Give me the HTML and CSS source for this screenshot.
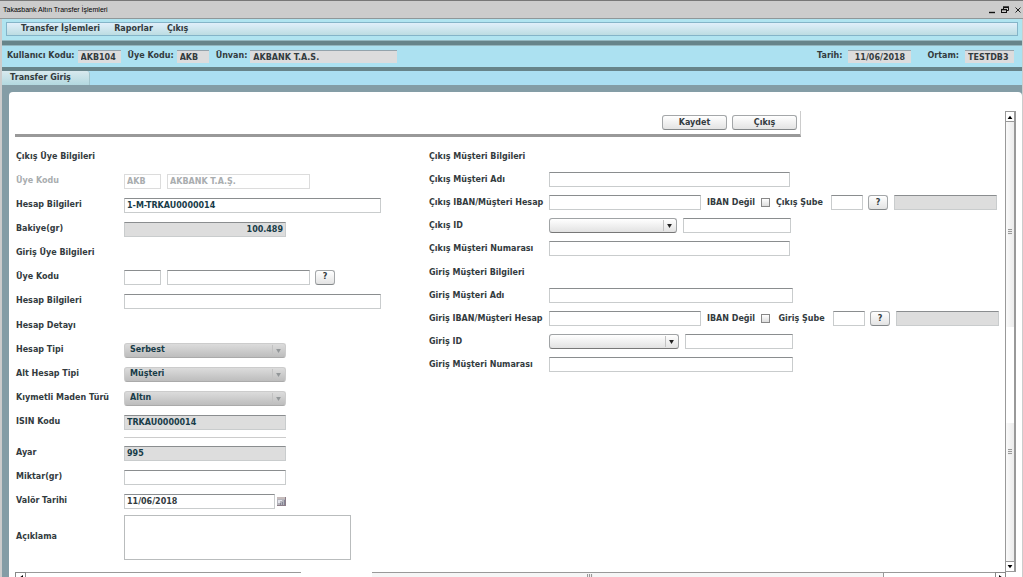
FILE: index.html
```html
<!DOCTYPE html>
<html lang="tr">
<head>
<meta charset="utf-8">
<title>Takasbank Altın Transfer İşlemleri</title>
<link rel="stylesheet" href="styles.css">
</head>
<body>
<div class="window">
  <header class="titlebar">
    <h1 class="title">Takasbank Altın Transfer İşlemleri</h1>
    <div class="controls">
      <button type="button" aria-label="Küçült"><svg viewBox="0 0 8 8"><path d="M1 6.5h6" stroke="#111" stroke-width="1.4"/></svg></button>
      <button type="button" aria-label="Geri yükle"><svg viewBox="0 0 8 8" fill="none" stroke="#111"><path d="M2.5 3V1.5h5v3H6" /><path d="M2 1h6" stroke-width="1.4"/><rect x=".5" y="3.5" width="5" height="3" fill="#ccc"/><path d="M0 3.6h6" stroke-width="1.4"/></svg></button>
      <button type="button" aria-label="Kapat"><svg viewBox="0 0 8 8"><path d="M1.5 1.5l5 5M6.5 1.5l-5 5" stroke="#222"/></svg></button>
    </div>
  </header>
  <div class="app">
    <div class="menu-wrap">
      <nav class="menu">
        <button type="button">Transfer İşlemleri</button>
        <button type="button">Raporlar</button>
        <button type="button">Çıkış</button>
      </nav>
    </div>
    <div class="info">
      <label for="user">Kullanıcı Kodu:</label><input id="user" class="w-user" value="AKB104" readonly>
      <label for="member">Üye Kodu:</label><input id="member" class="w-member" value="AKB" readonly>
      <label for="name">Ünvan:</label><input id="name" class="w-name" value="AKBANK T.A.S." readonly>
      <label for="date" class="push">Tarih:</label><input id="date" class="w-date" value="11/06/2018" readonly>
      <label for="env" class="env">Ortam:</label><input id="env" class="w-env" value="TESTDB3" readonly>
    </div>
    <div class="tabs"><button type="button" class="tab">Transfer Giriş</button></div>
    <main class="panel">
      <div class="content">
        <div class="toolbar">
          <button type="button" class="btn wide">Kaydet</button>
          <button type="button" class="btn wide">Çıkış</button>
        </div>
        <form class="form">
          <div class="col left">
            <h2 class="row">Çıkış Üye Bilgileri</h2>
            <div class="row off"><label for="a1">Üye Kodu</label><input id="a1" class="w-code" value="AKB" disabled><input class="w-title" aria-label="Üye adı" value="AKBANK T.A.Ş." disabled></div>
            <div class="row"><label for="a2">Hesap Bilgileri</label><input id="a2" class="w-acc" value="1-M-TRKAU0000014"></div>
            <div class="row"><label for="a3">Bakiye(gr)</label><input id="a3" class="w-mid gray num" value="100.489" readonly></div>
            <h2 class="row">Giriş Üye Bilgileri</h2>
            <div class="row"><label for="a4">Üye Kodu</label><input id="a4" class="w-code"><input class="w-title" aria-label="Üye adı"><button type="button" class="btn help">?</button></div>
            <div class="row"><label for="a5">Hesap Bilgileri</label><input id="a5" class="w-acc"></div>
            <h2 class="row section">Hesap Detayı</h2>
            <div class="row"><label for="a6">Hesap Tipi</label><span class="select w-mid"><select id="a6" disabled><option>Serbest</option></select><svg viewBox="0 0 6 5"><path d="M0 0h6L3 5z"/></svg></span></div>
            <div class="row"><label for="a7">Alt Hesap Tipi</label><span class="select w-mid"><select id="a7" disabled><option>Müşteri</option></select><svg viewBox="0 0 6 5"><path d="M0 0h6L3 5z"/></svg></span></div>
            <div class="row"><label for="a8">Kıymetli Maden Türü</label><span class="select w-mid"><select id="a8" disabled><option>Altın</option></select><svg viewBox="0 0 6 5"><path d="M0 0h6L3 5z"/></svg></span></div>
            <div class="row"><label for="a9">ISIN Kodu</label><input id="a9" class="w-mid gray" value="TRKAU0000014" readonly></div>
            <hr class="rule w-mid">
            <div class="row"><label for="a10">Ayar</label><input id="a10" class="w-mid gray" value="995" readonly></div>
            <div class="row"><label for="a11">Miktar(gr)</label><input id="a11" class="w-mid"></div>
            <div class="row"><label for="a12">Valör Tarihi</label><input id="a12" class="w-day dark" value="11/06/2018"><button type="button" class="cal" aria-label="Takvim"><svg viewBox="0 0 9 9"><path d="M0 0h9v9H0z" fill="#b4b4bb"/><path d="M0 0h9v2H0z" fill="#c6bcbc"/><path d="M1 3h4v1H3v2H1z" fill="#e4e4ec"/><path d="M5 5h1v3H5zM7 3h1v5H7zM3 6h1v2H3z" fill="#858596"/><path d="M8 0h1v9H0V8h8z" fill="#8b7d88"/></svg></button></div>
            <div class="row tall"><label for="a13">Açıklama</label><textarea id="a13"></textarea></div>
          </div>
          <div class="col right">
            <h2 class="row">Çıkış Müşteri Bilgileri</h2>
            <div class="row"><label for="b1">Çıkış Müşteri Adı</label><input id="b1" class="w-full"></div>
            <div class="row"><label for="b2">Çıkış IBAN/Müşteri Hesap</label><input id="b2" class="w-iban"><label for="b3" class="iban">IBAN Değil</label><input type="checkbox" id="b3"><label for="b4" class="branch">Çıkış Şube</label><input id="b4" class="w-branch"><button type="button" class="btn help">?</button><input class="gray w-desc" aria-label="Çıkış şube adı" readonly></div>
            <div class="row"><label for="b5">Çıkış ID</label><span class="select w-id"><select id="b5"><option></option></select><svg viewBox="0 0 6 5"><path d="M0 0h6L3 5z"/></svg></span><input class="w-idno" aria-label="Çıkış ID numarası"></div>
            <div class="row"><label for="b6">Çıkış Müşteri Numarası</label><input id="b6" class="w-full"></div>
            <h2 class="row section">Giriş Müşteri Bilgileri</h2>
            <div class="row"><label for="c1">Giriş Müşteri Adı</label><input id="c1" class="w-full2"></div>
            <div class="row"><label for="c2">Giriş IBAN/Müşteri Hesap</label><input id="c2" class="w-iban"><label for="c3" class="iban">IBAN Değil</label><input type="checkbox" id="c3"><label for="c4" class="branch wider">Giriş Şube</label><input id="c4" class="w-branch"><button type="button" class="btn help">?</button><input class="gray w-desc" aria-label="Giriş şube adı" readonly></div>
            <div class="row"><label for="c5">Giriş ID</label><span class="select w-id2"><select id="c5"><option></option></select><svg viewBox="0 0 6 5"><path d="M0 0h6L3 5z"/></svg></span><input class="w-idno" aria-label="Giriş ID numarası"></div>
            <div class="row"><label for="c6">Giriş Müşteri Numarası</label><input id="c6" class="w-full2"></div>
          </div>
        </form>
        <div class="hbar">
          <span class="harrow"><svg viewBox="0 0 6 6"><path d="M5 0v6L1 3z"/></svg></span>
          <span class="hline"></span><span class="hgap"></span>
          <span class="hthumb"><i></i></span><span class="htrack"></span>
          <span class="harrow"><svg viewBox="0 0 6 6"><path d="M1 0v6l4-3z"/></svg></span>
        </div>
      </div>
      <div class="vbar">
        <span class="varrow"><svg viewBox="0 0 6 5"><path d="M0 5h6L3 1z"/></svg></span>
        <span class="vthumb first"><i></i></span>
        <span class="vtrack"></span>
        <span class="vthumb second"><i></i></span>
        <span class="varrow"><svg viewBox="0 0 6 5"><path d="M0 0h6L3 4z"/></svg></span>
      </div>
    </main>
  </div>
</div>
</body>
</html>
```
FILE: styles.css
```css
* { box-sizing: border-box; }
body { margin: 0; background: #ccc; }
body, button, input, select, textarea {
  font: bold 8px/12px "DejaVu Sans", Verdana, sans-serif;
  color: #333b3e;
}
button { padding: 0; border: 0; background: none; }
svg { display: block; }

.window { display: flex; flex-direction: column; height: 100vh; overflow: hidden; border-top: 1px solid #777; }
.titlebar { display: flex; align-items: center; justify-content: space-between; height: 18px; padding: 0 1px 0 3px; border-bottom: 1px solid #8f9799; background: #ccc; }
.title { margin: 0; font: 7px/12px "Liberation Sans", Arial, sans-serif; color: #000; }
.controls { display: flex; gap: 5px; }
.controls svg { width: 8px; height: 8px; }

.app { display: flex; flex: 1; flex-direction: column; min-height: 0; margin: 0 1px 0 2px; background: #849da6; }
.menu-wrap { padding: 3px 4px 4px; border-bottom: 1px solid #94b6bf; background: #b0e4f0; }
.menu { display: flex; gap: 14px; height: 14px; padding-left: 14px; border: 1px solid #84b4c8; background: linear-gradient(#e0effa, #bcdde2); }
.info { display: flex; align-items: flex-start; height: 22px; margin-top: 4px; padding: 4px 8px 0 5px; border-top: 1px solid #94b6bf; background: #ace1f1; box-shadow: 0 -4px #67848a; }
.info label { margin: 0 3px 0 7px; }
.info label:first-child { margin-left: 0; }
.info .push { margin-left: auto; margin-right: 6px; }
.info .env { margin-left: 16px; margin-right: 6px; }
.info input { height: 13px; padding: 0 3px; border: 0; border-top: 1px solid #94a3ac; background: #dcdcdd; }
.info .w-env { padding-right: 0; }
.w-user { width: 43px; }
.w-member { width: 32px; }
.w-name { width: 147px; }
.w-date { width: 63px; text-align: center; }
.w-env { width: 49px; }
.tabs { height: 18px; border-top: 4px solid #67848a; background: #abdff2; }
.tab { display: block; width: 88px; height: 14px; padding-right: 10px; border-right: 1px solid #a2c6ce; border-radius: 0 3px 0 0; background: linear-gradient(#d8e9ee, #b3d9e0); }

.panel { display: flex; flex: 1; min-height: 0; margin: 7px 0 0 7px; padding: 19px 6px 0; border-radius: 4px 4px 0 0; background: #fff; }
.content { display: flex; flex: 1; flex-direction: column; min-width: 0; }
.toolbar { display: flex; align-items: center; justify-content: flex-end; gap: 5px; width: 786px; height: 26px; padding-right: 3px; border-right: 1px solid #ccc; border-bottom: 3px solid #999; }
.btn { height: 15px; border: 1px solid #a4a7a9; border-bottom-color: #84888a; border-radius: 3px; background: linear-gradient(#fff, #e3e3e3); line-height: 12px; }
.wide { width: 65px; }
.help { width: 20px; margin-left: -1px; }

.form { display: flex; flex: 1; min-height: 0; padding: 8px 0 0 1px; }
.left { width: 413px; }
.right { flex: 1; }
.row { display: flex; align-items: center; gap: 6px; height: 24px; margin: 0; font-size: 8px; white-space: nowrap; }
.right .row { height: 23px; }
.section.row { margin-top: 1px; }
.row > label:first-child { flex: none; width: 102px; }
.right .row > label:first-child { width: 114px; }
.row input, textarea { flex: none; margin: 0; border: 1px solid #c9cccd; border-top-color: #8a8d8f; border-radius: 0; background: #fff; color: #183c48; }
.row input { height: 15px; padding: 0 2px; }
.row .gray { background: #ddd; }
.row .dark { color: #333b3e; }
.row .num { text-align: right; }
.row.off label { color: #a9adaf; }
.row.off input { border-color: #dcdcdc; color: #a9adaf; }
.w-code { width: 37px; }
.w-title { width: 143px; }
.w-acc { width: 257px; }
.w-mid { width: 162px; }
.w-day { width: 151px; }
.w-full { width: 241px; }
.w-full2 { width: 244px; }
.w-iban { width: 152px; }
.w-branch { width: 32px; }
.w-desc { width: 103px; }
.w-id { width: 128px; }
.w-id2 { width: 130px; }
.w-idno { width: 108px; }
.iban { width: 48px; }
.branch { width: 49px; }
.wider { width: 51px; text-align: center; }
.row input[type="checkbox"] { appearance: none; width: 9px; height: 9px; padding: 0; border-color: #888; background: linear-gradient(#fff, #ddd); }

.select { position: relative; flex: none; }
.select select { display: block; width: 100%; height: 15px; padding: 0 5px; appearance: none; border: 1px solid #a0a3a5; border-bottom-color: #777; border-radius: 3px; background: linear-gradient(#fff, #e2e2e2); opacity: 1; }
.select::after { content: ""; position: absolute; top: 2px; right: 13px; height: 11px; border-left: 1px solid #c2c2c2; }
.select svg { position: absolute; top: 6px; right: 5px; width: 5px; height: 4px; pointer-events: none; fill: #222; }
.select select:disabled { border-color: #ccc; border-bottom-color: #aaa; background: linear-gradient(#dcdcdc, #bdbdbd); color: #183c48; }
.select select:disabled + svg { fill: #929698; }
.rule { height: 1px; margin: 3px 0 3px 108px; border: 0; background: #ccc; }
.cal { margin-left: -4px; }
.cal svg { width: 9px; height: 9px; }
.tall.row { height: 48px; }
textarea { width: 227px; height: 45px; padding: 2px; resize: none; }
.row textarea { border-color: #b9bcbd; }

.hbar { display: flex; height: 5px; overflow: hidden; margin-right: -1px; }
.harrow { width: 11px; height: 11px; padding: 2px; border: 1px solid #888; }
.harrow svg { width: 6px; height: 6px; }
.hline { width: 275px; border-top: 1px solid #999; }
.hgap { width: 71px; }
.hthumb { flex: 1; height: 11px; border: 1px solid #999; border-left: 0; background: #f6f6f6; }
.hthumb i { display: block; width: 6px; height: 4px; margin: 1px 0 0 215px; background: repeating-linear-gradient(90deg, #999 0 1px, #eee 1px 2px); }
.htrack { width: 111px; border-top: 1px solid #999; }
.vbar { display: flex; flex-direction: column; width: 11px; margin-bottom: 5px; border: 1px solid #999; border-right: 2px solid #999; }
.varrow { height: 10px; padding: 3px 1px; border-bottom: 1px solid #999; }
.varrow:last-child { border-top: 1px solid #999; border-bottom: 0; }
.varrow svg { width: 6px; height: 4px; }
.vthumb { display: flex; align-items: center; justify-content: center; background: linear-gradient(90deg, #fafafa, #ececec); }
.vthumb i { width: 4px; height: 6px; background: repeating-linear-gradient(#999 0 1px, #eee 1px 2px); }
.first { flex: 1 1 205px; padding-top: 16px; }
.vtrack { flex: 1 1 97px; }
.second { flex: 1 1 138px; align-items: flex-start; padding-top: 26px; }
```
